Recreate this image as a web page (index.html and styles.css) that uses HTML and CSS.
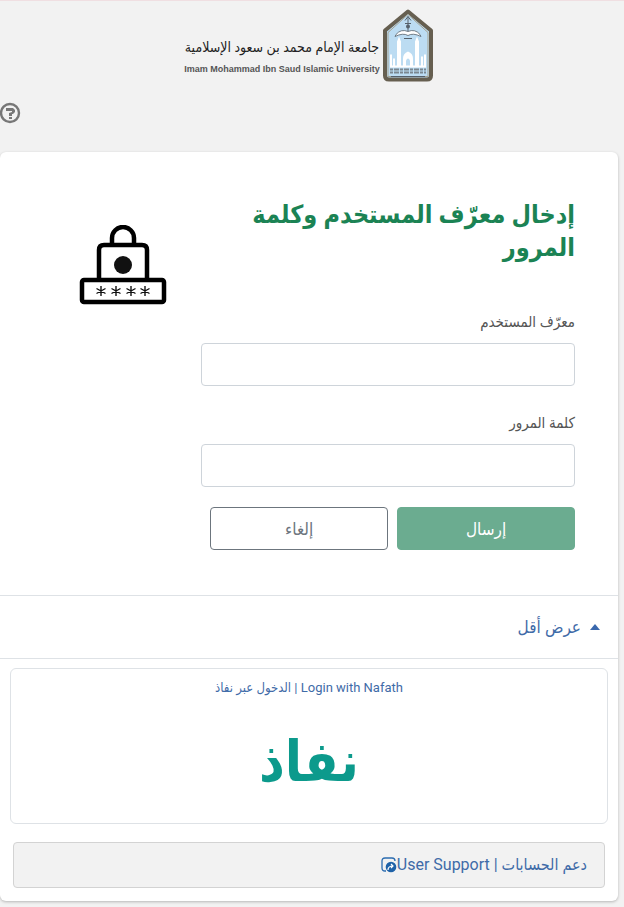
FILE: index.html
```
<!DOCTYPE html>
<html lang="ar" dir="rtl">

<head>
    <meta charset="UTF-8">
    <meta name="viewport" content="width=device-width, initial-scale=1.0">
    <title>تسجيل الدخول</title>
    <link rel="stylesheet" href="styles.css">
</head>

<body>

    <header class="header">
        <svg class="emblem" viewBox="0 0 52 72" aria-hidden="true">
            <path d="M26 2 L49 21 V66 Q49 70 45 70 H7 Q3 70 3 66 V21 Z" fill="#bcdcf2" stroke="#665f50" stroke-width="4" stroke-linejoin="round" />
            <path d="M26 5 L46 23 V67 H6 V23 Z" fill="none" stroke="#a6a28f" stroke-width="1" />
            <path d="M26 7 V22 M23 11 L26 7 L29 11 M23 14 H29" fill="none" stroke="#56616b" stroke-width="1" />
            <circle cx="26" cy="17" r="2" fill="#56616b" />
            <path d="M14 25 Q19 19 26 22 Q33 19 38 25 L39 27 Q31 23 26 26 Q21 23 13 27 Z" fill="#fff" stroke="#56616b" stroke-width="0.8" />
            <path d="M22 29 H30" stroke="#56616b" stroke-width="1" />
            <path d="M15 32 L17 27 L19 32 V57 H15 Z M33 32 L35 27 L37 32 V57 H33 Z" fill="#fff" />
            <path d="M21 57 V49 Q21 44 26 42 Q31 44 31 49 V57 Z" fill="#fff" />
            <path d="M24 57 V51 Q26 47 28 51 V57 Z" fill="#bcdcf2" />
            <path d="M9 45 V57 H43 V45 M12 49 V57 M40 47 V57" fill="none" stroke="#fff" stroke-width="2" />
            <path d="M8 60 H44 M8 63 H44" stroke="#7b8790" stroke-width="2" stroke-dasharray="3 1 5 1" />
            <path d="M9 67 H43" stroke="#56616b" stroke-width="1" />
        </svg>
        <div class="uni">
            <span class="uni-ar">جامعة الإمام محمد بن سعود الإسلامية</span>
            <span class="uni-en" dir="ltr">Imam Mohammad Ibn Saud Islamic University</span>
        </div>
    </header>

    <div class="help-row">
        <button type="button" class="help" aria-label="مساعدة">
            <svg viewBox="0 0 22 22" aria-hidden="true">
                <circle cx="10" cy="11" r="9" fill="none" stroke="#777" stroke-width="2.4" />
                <path d="M6 6 H13 L15 8 V10 L13 12 H12 V14 H9 V11 L12 10 V9 H6 Z" fill="#777" />
                <path d="M9 15 H12 V17 H9 Z" fill="#777" />
            </svg>
        </button>
    </div>

    <main class="card">
        <div class="login">
            <form class="login-form">
                <h1>إدخال معرّف المستخدم وكلمة المرور</h1>
                <label for="username">معرّف المستخدم</label>
                <input type="text" id="username" name="username">
                <label for="password">كلمة المرور</label>
                <input type="password" id="password" name="password">
                <div class="buttons">
                    <button type="submit" class="btn btn-send">إرسال</button>
                    <button type="button" class="btn btn-cancel">إلغاء</button>
                </div>
            </form>
            <div class="login-icon">
                <svg viewBox="0 0 88 80" aria-hidden="true">
                    <path d="M33 18 V13 A11 11 0 0 1 55 13 V18" fill="none" stroke="#000" stroke-width="4.5" />
                    <path d="M20 54 V25 Q20 20 25 20 H63 Q68 20 68 25 V54" fill="none" stroke="#000" stroke-width="4.5" />
                    <circle cx="44" cy="40" r="9" fill="#111" />
                    <rect x="3" y="55" width="82" height="22" rx="2" fill="#fff" stroke="#000" stroke-width="4.5" />
                    <path d="M22 61 V71 M17.5 63.5 L26.5 68.5 M26.5 63.5 L17.5 68.5
                        M37 61 V71 M32.5 63.5 L41.5 68.5 M41.5 63.5 L32.5 68.5
                        M52 61 V71 M47.5 63.5 L56.5 68.5 M56.5 63.5 L47.5 68.5
                        M66 61 V71 M61.5 63.5 L70.5 68.5 M70.5 63.5 L61.5 68.5" fill="none" stroke="#111" stroke-width="1.4" />
                </svg>
            </div>
        </div>

        <div class="less">
            <a href="#other">
                <svg viewBox="0 0 12 6" aria-hidden="true">
                    <path d="M1 6 L6 0 L11 6 Z" fill="#3a68ad" />
                </svg>
                <span>عرض أقل</span>
            </a>
        </div>

        <div class="other" id="other">
            <a href="#nafath" class="nafath">
                <span class="nafath-text">Login with Nafath | الدخول عبر نفاذ</span>
                <span class="nafath-logo">نفاذ</span>
            </a>
            <div class="support">
                <a href="#support">
                    <span>دعم الحسابات | User Support</span>
                    <svg viewBox="0 0 16 16" aria-hidden="true">
                        <path d="M5 14 H4 Q1 14 1 11 V4 Q1 1 4 1 H11 Q14 1 14 4" fill="none" stroke="#2b6cb0" stroke-width="1.3" />
                        <circle cx="10" cy="10" r="5.3" fill="#1f62a8" />
                        <path d="M7 13 Q7 9 12 9 M10 7 L12 9 L10 11" fill="none" stroke="#fff" stroke-width="1.2" />
                    </svg>
                </a>
            </div>
        </div>
    </main>

</body>

</html>
```
FILE: styles.css
```
* {
    box-sizing: border-box;
}

body {
    margin: 0;
    background: #f2f2f2;
    border-top: 1px solid #f0dfe2;
    font-family: Roboto, "DejaVu Sans Condensed", "DejaVu Sans", sans-serif;
    color: #555;
}

a {
    color: #3f6ba8;
    text-decoration: none;
}

.header {
    display: flex;
    justify-content: center;
    gap: 2px;
    padding: 8px 6px 20px 0;
}

.emblem {
    width: 52px;
    height: 73px;
}

.uni {
    display: flex;
    flex-direction: column;
    align-items: center;
    justify-content: flex-end;
    padding-bottom: 7px;
    white-space: nowrap;
}

.uni-ar {
    font-size: 14px;
    line-height: 32px;
    color: #222;
}

.uni-en {
    font-family: "Liberation Sans", sans-serif;
    font-size: 9px;
    font-weight: bold;
    line-height: 12px;
}

.help-row {
    display: flex;
    justify-content: flex-end;
    padding-bottom: 28px;
}

.help {
    width: 22px;
    height: 22px;
    padding: 0;
    border: none;
    background: none;
    cursor: pointer;
}

.help svg {
    display: block;
}

.card {
    margin: 0 6px 6px 0;
    background: #fff;
    border-radius: 6px;
    box-shadow: 0 1px 3px rgba(0, 0, 0, 0.25);
}

.login {
    display: flex;
    padding: 46px 43px 45px 0;
}

.login-form {
    flex: 0 0 65%;
}

.login-icon {
    flex: 1;
    padding: 27px 0 0 79px;
    display: flex;
    justify-content: flex-end;
    align-items: flex-start;
}

.login-icon svg {
    width: 88px;
    height: 80px;
}

h1 {
    margin: 0 0 46px;
    font-size: 25px;
    line-height: 33px;
    color: #1b8354;
}

label {
    display: block;
    font-size: 15px;
    line-height: 24px;
    margin-bottom: 9px;
}

.login-form input {
    display: block;
    width: 100%;
    height: 43px;
    margin-bottom: 25px;
    padding: 0 12px;
    border: 1px solid #ced4da;
    border-radius: 4px;
    background: #fff;
    font-size: 16px;
}

.buttons {
    display: flex;
    gap: 9px;
    margin-top: -5px;
    padding-left: 9px;
}

.btn {
    flex: 1;
    height: 43px;
    border: 1px solid #6c757d;
    border-radius: 4px;
    background: #fff;
    color: #6c757d;
    font-family: inherit;
    font-size: 17px;
    cursor: pointer;
}

.btn-send {
    background: #6bac90;
    border-color: #6bac90;
    color: #fff;
}

.less {
    border-top: 1px solid #dee2e6;
    border-bottom: 1px solid #dee2e6;
    padding: 15px 17px;
}

.less a {
    display: inline-flex;
    align-items: center;
    gap: 8px;
    font-size: 17px;
    line-height: 32px;
}

.less svg {
    width: 12px;
    height: 6px;
}

.other {
    padding: 9px 10px 13px;
}

.nafath {
    display: flex;
    flex-direction: column;
    align-items: center;
    height: 156px;
    padding-top: 8px;
    border: 1px solid #dee2e6;
    border-radius: 6px;
}

.nafath-text {
    font-size: 13px;
    line-height: 22px;
}

.nafath-logo {
    margin-top: 28px;
    font-size: 56px;
    font-weight: bold;
    line-height: 70px;
    color: #0c9a8c;
}

.support {
    margin: 18px 3px 0;
    padding: 10px 17px;
    border: 1px solid #d3d3d3;
    border-radius: 4px;
    background: #f2f2f2;
}

.support a {
    display: flex;
    align-items: center;
    font-size: 16px;
    line-height: 24px;
}

.support svg {
    width: 16px;
    height: 16px;
}
```
